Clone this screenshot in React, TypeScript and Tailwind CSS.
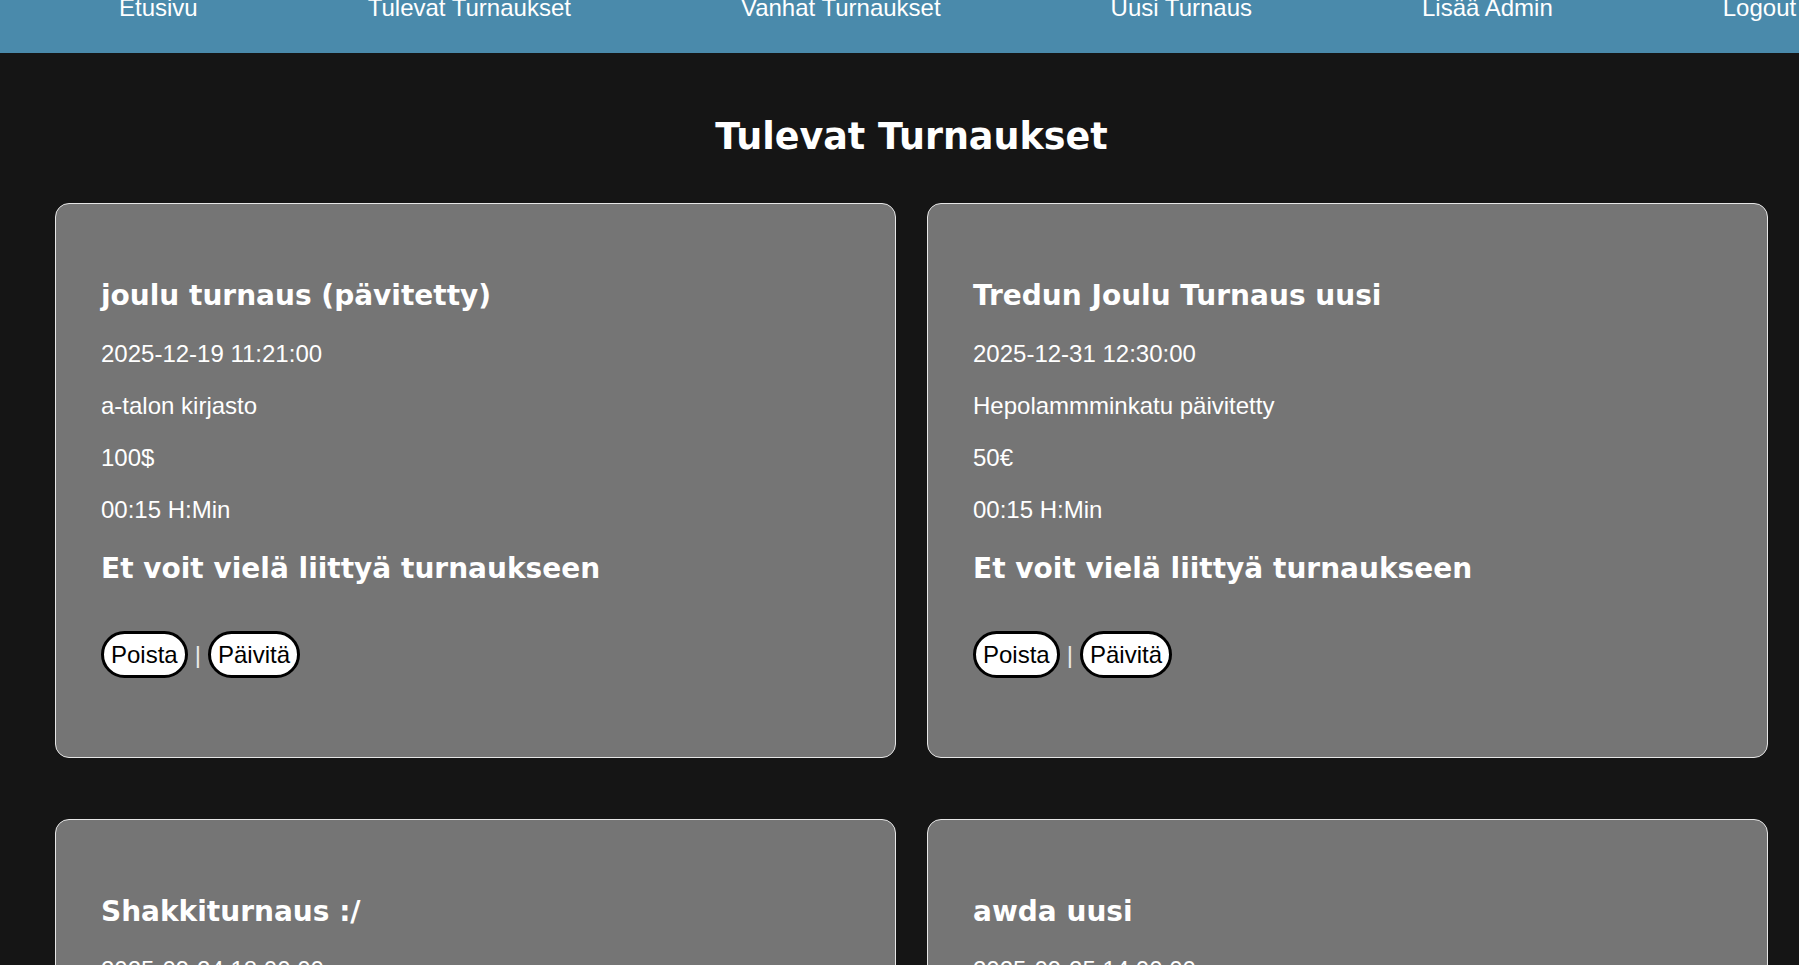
const navLinks = ["Etusivu", "Tulevat Turnaukset", "Vanhat Turnaukset", "Uusi Turnaus", "Lisää Admin", "Logout"];

type Tournament = {
  name: string;
  date: string;
  place: string;
  price: string;
  duration: string;
};

const tournaments: Tournament[] = [
  { name: "joulu turnaus (pävitetty)", date: "2025-12-19 11:21:00", place: "a-talon kirjasto", price: "100$", duration: "00:15 H:Min" },
  { name: "Tredun Joulu Turnaus uusi", date: "2025-12-31 12:30:00", place: "Hepolammminkatu päivitetty", price: "50€", duration: "00:15 H:Min" },
  { name: "Shakkiturnaus :/", date: "2025-09-24 18:00:00", place: "a-talon kirjasto", price: "10€", duration: "01:00 H:Min" },
  { name: "awda uusi", date: "2025-09-25 14:00:00", place: "awda", price: "0€", duration: "00:30 H:Min" },
];

function TournamentCard({ t }: { t: Tournament }) {
  return (
    <div className="flex flex-col rounded-[14px] border border-[#e6e6e6] bg-[#757575] pl-[45px] pr-[45px] pt-[76px] pb-[79px] text-white">
      <h2 className="m-0 font-['DejaVu_Sans',sans-serif] text-[28px] font-bold leading-[32.6px]">{t.name}</h2>
      <div className="mt-[27px] flex flex-col gap-[24px] font-['Liberation_Sans',Arial,sans-serif] text-[24px] leading-[28px]">
        <p>{t.date}</p>
        <p>{t.place}</p>
        <p>{t.price}</p>
        <p>{t.duration}</p>
      </div>
      <h3 className="mt-[29px] font-['DejaVu_Sans',sans-serif] text-[28px] font-bold leading-[32.6px]">Et voit vielä liittyä turnaukseen</h3>
      <div className="mt-[46px] flex items-center font-['Liberation_Sans',Arial,sans-serif] text-[24px]">
        <button className="h-[47px] rounded-full border-[3px] border-black bg-white px-[7px] leading-none text-black">Poista</button>
        <span className="mx-[7px] text-[#e8e8e8]">|</span>
        <button className="h-[47px] rounded-full border-[3px] border-black bg-white px-[7px] leading-none text-black">Päivitä</button>
      </div>
    </div>
  );
}

export default function App() {
  return (
    <div className="min-h-screen bg-[#151515]">
      <nav className="h-[53px] overflow-hidden bg-[#4a8aab]">
        <ul className="-mt-[4px] flex gap-[170px] pl-[119px] font-['Liberation_Sans',Arial,sans-serif] text-[24px] leading-[24px] text-white">
          {navLinks.map((l) => (
            <li key={l} className="whitespace-nowrap">{l}</li>
          ))}
        </ul>
      </nav>

      <main className="pl-[55px] pr-[31px]">
        <h1 className="pt-[63px] text-center font-['DejaVu_Sans',sans-serif] text-[36.5px] font-bold leading-[42px] text-white">Tulevat Turnaukset</h1>
        <div className="mt-[45px] grid grid-cols-2 gap-x-[31px] gap-y-[61px] pb-[60px]">
          {tournaments.map((t) => (
            <TournamentCard key={t.name} t={t} />
          ))}
        </div>
      </main>
    </div>
  );
}
